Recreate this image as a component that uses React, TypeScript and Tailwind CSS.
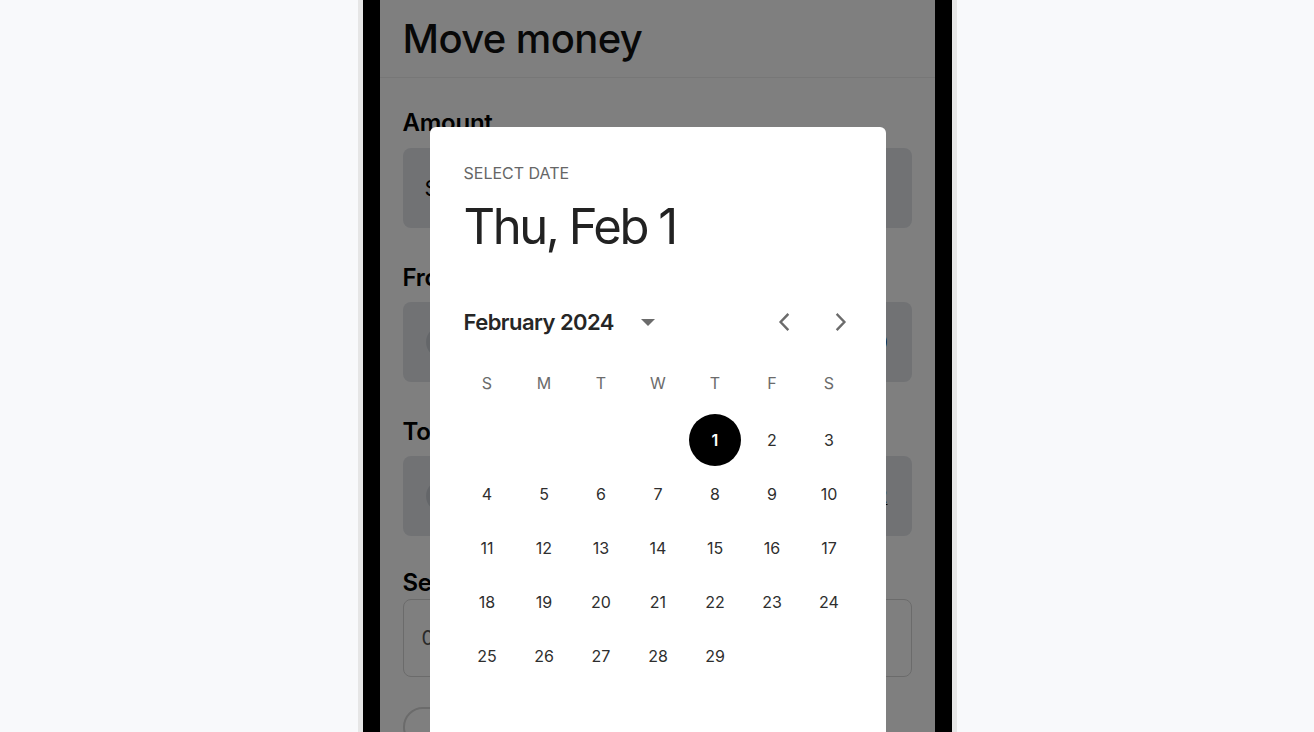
import React from "react";

const FONT = { fontFamily: "Inter, 'Liberation Sans', sans-serif" };

const weekdays = ["S", "M", "T", "W", "T", "F", "S"];

// Feb 2024 starts on a Thursday
const days: (number | null)[] = [
  null,
  null,
  null,
  null,
  ...Array.from({ length: 29 }, (_, i) => i + 1),
];

const ChevronLeft = () => (
  <svg width="12" height="18" viewBox="0 0 12 18" fill="none">
    <path d="M9.5 1.8 L2.6 9 L9.5 16.2" stroke="#6b6b6b" strokeWidth="2.4" strokeLinecap="square" />
  </svg>
);

const ChevronRight = () => (
  <svg width="12" height="18" viewBox="0 0 12 18" fill="none">
    <path d="M2.5 1.8 L9.4 9 L2.5 16.2" stroke="#6b6b6b" strokeWidth="2.4" strokeLinecap="square" />
  </svg>
);

const Caret = () => (
  <svg width="14" height="7" viewBox="0 0 14 7">
    <polygon points="0,0 14,0 7,7" fill="#6b6b6b" />
  </svg>
);

const DatePicker = () => {
  const selected = 1;

  return (
    <div className="absolute left-[50px] top-[127px] w-[456px] -bottom-[20px] bg-white rounded-[6px]">
      <div className="pt-[36px] px-[34px]">
        <div className="text-[16px] leading-[20px] text-[#666666] uppercase">Select date</div>
        <div className="mt-[14px] text-[49px] leading-[60px] text-[#222222] tracking-[-0.05em]">
          Thu, Feb 1
        </div>
      </div>

      {/* Month header */}
      <div className="mt-[41px] h-[48px] flex items-center pl-[34px] pr-[25px]">
        <span className="text-[22px] font-semibold text-[#262626] tracking-[-0.025em]">February 2024</span>
        <span className="ml-[27px] flex items-center">
          <Caret />
        </span>
        <div className="ml-auto flex items-center gap-[17px]">
          <button className="w-10 h-10 flex items-center justify-center">
            <ChevronLeft />
          </button>
          <button className="w-10 h-10 flex items-center justify-center">
            <ChevronRight />
          </button>
        </div>
      </div>

      {/* Calendar grid */}
      <div className="mt-[17px] w-[399px] ml-[29px]">
        <div className="grid grid-cols-7 h-[40px]">
          {weekdays.map((d, i) => (
            <div key={i} className="flex items-center justify-center text-[16px] text-[#6b6b6b]">
              {d}
            </div>
          ))}
        </div>
        <div className="mt-[10px] grid grid-cols-7 auto-rows-[54px]">
          {days.map((d, i) => (
            <div key={i} className="flex items-center justify-center">
              {d !== null &&
                (d === selected ? (
                  <span className="w-[52px] h-[52px] rounded-full bg-black text-white text-[16px] font-semibold flex items-center justify-center">
                    {d}
                  </span>
                ) : (
                  <span className="text-[16px] text-[#2e2e2e]">{d}</span>
                ))}
            </div>
          ))}
        </div>
      </div>
    </div>
  );
};

const FieldLabel = ({ children }: { children: React.ReactNode }) => (
  <div className="text-[24px] leading-[32px] font-semibold text-black tracking-[-0.01em]">{children}</div>
);

export default function App() {
  return (
    <div className="w-full h-[732px] bg-[#f8f9fb] flex justify-center overflow-hidden" style={FONT}>
      <div className="w-[599px] h-full border-x-[5px] border-[#e6e6e6] flex">
        <div className="flex-1 h-full border-x-[17px] border-black flex">
          <div className="relative flex-1 h-full bg-white overflow-hidden">
            {/* Page behind the dialog */}
            <div className="h-[78px] px-[23px] flex items-center border-b border-[#eeeeee]">
              <h1 className="text-[40px] font-medium text-[#111111] tracking-[-0.015em]">Move money</h1>
            </div>

            <div className="px-[23px]">
              <div className="pt-[29px]">
                <FieldLabel>Amount</FieldLabel>
                <div className="mt-[9px] h-[80px] rounded-[8px] bg-[#e2e5e9] flex items-center px-[22px]">
                  <span className="text-[22px] text-black">$0</span>
                </div>
              </div>

              <div className="mt-[34px]">
                <FieldLabel>From</FieldLabel>
                <div className="mt-[8px] h-[80px] rounded-[8px] bg-[#e2e5e9] flex items-center pl-[23px] pr-[24px]">
                  <span className="w-[32px] h-[32px] rounded-full bg-[#c9cdd3]" />
                  <span className="ml-auto text-[18px] text-black">0</span>
                </div>
              </div>

              <div className="mt-[34px]">
                <FieldLabel>To</FieldLabel>
                <div className="mt-[8px] h-[80px] rounded-[8px] bg-[#e2e5e9] flex items-center pl-[23px] pr-[24px]">
                  <span className="w-[32px] h-[32px] rounded-full bg-[#c9cdd3]" />
                  <span className="ml-auto text-[18px] text-black underline">2</span>
                </div>
              </div>

              <div className="mt-[31px]">
                <FieldLabel>Send</FieldLabel>
                <div className="h-[78px] rounded-[8px] border border-[#d6d6d6] bg-white flex items-center px-[18px]">
                  <span className="text-[20px] leading-[24px] text-[#555555]">0</span>
                </div>
              </div>

              <div className="mt-[30px] w-[64px] h-[40px] rounded-full border-2 border-[#d6d6d6]" />
            </div>

            {/* Scrim */}
            <div className="absolute inset-0 bg-black/50" />

            <DatePicker />
          </div>
        </div>
      </div>
    </div>
  );
}
